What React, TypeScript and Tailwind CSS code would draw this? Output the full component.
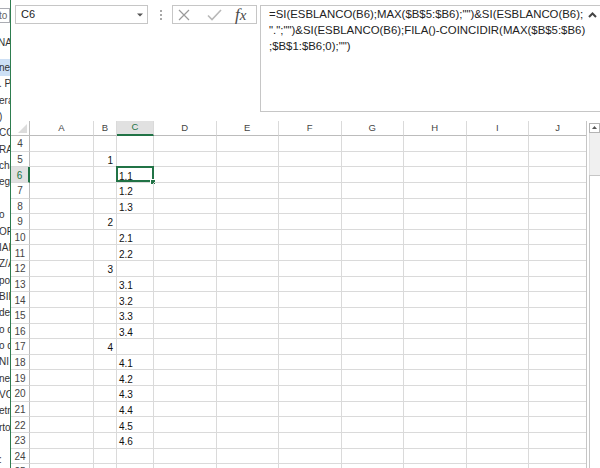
import React from "react";

const COLS = [
  { key: "A", w: "w-[64px]" },
  { key: "B", w: "w-[23px]" },
  { key: "C", w: "w-[37px]" },
  { key: "D", w: "w-[62.5px]" },
  { key: "E", w: "w-[62.5px]" },
  { key: "F", w: "w-[62.5px]" },
  { key: "G", w: "w-[62.5px]" },
  { key: "H", w: "w-[62.5px]" },
  { key: "I", w: "w-[62.5px]" },
  { key: "J", w: "w-[58px]" },
];

const B_VALS: Record<number, string> = { 5: "1", 9: "2", 12: "3", 17: "4" };
const C_VALS: Record<number, string> = {
  6: "1.1", 7: "1.2", 8: "1.3",
  10: "2.1", 11: "2.2",
  13: "3.1", 14: "3.2", 15: "3.3", 16: "3.4",
  18: "4.1", 19: "4.2", 20: "4.3", 21: "4.4", 22: "4.5", 23: "4.6",
};

const ROWS = Array.from({ length: 22 }, (_, i) => i + 4);

// bits of the window that sits behind excel on the left
const STRIP = [
  "ner", ". PI", "eral", ")", "CO", "RA", "cha", "egi", "", "o", "ORI", "IAI",
  "Z/A", " po", "BID", "des", "o de", "o de", "NI", "ner", "VO", "etr", "rto", "", " :",
];

function LeftStrip() {
  return (
    <div className="flex w-[10px] shrink-0 flex-col overflow-hidden text-[10px] text-[#333]">
      <div className="mt-[8px] flex h-[15px] w-[10px] items-center border-y border-r border-[#abadb3] whitespace-nowrap">
        <span className="ml-[-1px] text-[#666]">to</span>
      </div>
      <div className="mt-[12px] flex h-[16px] items-center whitespace-nowrap">
        <span className="ml-[-2px]">NAS</span>
      </div>
      <div className="mt-[8.8px] flex flex-col">
        {STRIP.map((t, i) => (
          <div
            key={i}
            className={
              "flex h-[16.35px] items-center whitespace-nowrap " +
              (i === 0 ? "bg-[#cde0f5]" : "")
            }
          >
            <span className="ml-[-1px]">{t}</span>
          </div>
        ))}
      </div>
    </div>
  );
}

function FormulaBar() {
  return (
    <div className="flex h-[121px] shrink-0 items-start pt-[5px]">
      <div className="ml-[4px] flex h-[19px] w-[133px] items-center justify-between border border-[#c6c6c6] pl-[5px] pr-[4px] text-[11px] text-[#222]">
        <span>C6</span>
        <svg width="6" height="4" viewBox="0 0 6 4">
          <path d="M0 0.5h6L3 3.5z" fill="#555" />
        </svg>
      </div>
      <div className="flex h-[19px] w-[24px] flex-col gap-[2.5px] pl-[12px] pt-[5px]">
        <div className="h-[1.5px] w-[1.5px] bg-[#a8a8a8]" />
        <div className="h-[1.5px] w-[1.5px] bg-[#a8a8a8]" />
        <div className="h-[1.5px] w-[1.5px] bg-[#a8a8a8]" />
      </div>
      <div className="flex h-[19px] w-[85px] items-center border border-[#c6c6c6]">
        <svg className="ml-[5px]" width="12" height="12" viewBox="0 0 12 12">
          <path d="M1 1L11 11M11 1L1 11" stroke="#9a9a9a" strokeWidth="1.2" fill="none" />
        </svg>
        <svg className="ml-[17px]" width="15" height="12" viewBox="0 0 15 12">
          <path d="M1 6.5L5 10.5L14 1" stroke="#b8b8b8" strokeWidth="1.6" fill="none" />
        </svg>
        <span className="ml-[13px] font-['Liberation_Serif',serif] italic leading-none text-[#4a4a4a]">
          <span className="text-[17px]">f</span>
          <span className="text-[15px]">x</span>
        </span>
      </div>
      <div className="ml-[3px] flex h-[107px] flex-1 border-y border-l border-[#c6c6c6]">
        <div className="flex-1 pl-[8px] text-[11.4px] leading-[16.2px] text-[#222] whitespace-nowrap">
          <div>=SI(ESBLANCO(B6);MAX($B$5:$B6);"")&amp;SI(ESBLANCO(B6);</div>
          <div>".";"")&amp;SI(ESBLANCO(B6);FILA()-COINCIDIR(MAX($B$5:$B6)</div>
          <div>;$B$1:$B6;0);"")</div>
        </div>
        <svg className="mr-[3px] mt-[6px]" width="9" height="6" viewBox="0 0 9 6">
          <path d="M1 5L4.5 1.5L8 5" stroke="#444" strokeWidth="2" fill="none" />
        </svg>
      </div>
    </div>
  );
}

function HeaderRow() {
  return (
    <div className="flex h-[15px] shrink-0">
      <div className="flex w-[19px] shrink-0 items-end justify-end border-b border-r border-[#bcbcbc] pb-[2px] pr-[2px]">
        <svg width="9" height="9" viewBox="0 0 9 9">
          <path d="M9 0V9H0Z" fill="#dcdcdc" />
        </svg>
      </div>
      {COLS.map((c) => {
        const sel = c.key === "C";
        return (
          <div
            key={c.key}
            className={
              c.w +
              " flex shrink-0 items-center justify-center border-r border-[#dadada] text-[9.5px] " +
              (sel
                ? "border-b-2 border-b-[#217346] bg-[#e1e1e1] text-[#217346]"
                : "border-b border-b-[#bcbcbc] text-[#444]")
            }
          >
            {c.key}
          </div>
        );
      })}
    </div>
  );
}

function Row({ n }: { n: number }) {
  const sel = n === 6;
  return (
    <div className="flex h-[15.63px] shrink-0">
      <div
        className={
          "flex w-[19px] shrink-0 items-center justify-center border-b border-b-[#dadada] pt-[1px] text-[10px] " +
          (sel
            ? "border-r-2 border-r-[#217346] bg-[#e1e1e1] text-[#217346]"
            : "border-r border-r-[#bcbcbc] text-[#444]")
        }
      >
        {n}
      </div>
      {COLS.map((c) => {
        let content: React.ReactNode = null;
        let align = "justify-start pl-[2px]";
        if (c.key === "B" && B_VALS[n]) {
          content = B_VALS[n];
          align = "justify-end pr-[3px]";
        }
        if (c.key === "C" && C_VALS[n]) content = C_VALS[n];
        const isSel = sel && c.key === "C";
        return (
          <div
            key={c.key}
            className={
              c.w +
              " relative flex shrink-0 items-center border-b border-r border-[#dadada] pt-[3px] text-[10px] text-[#111] " +
              align
            }
          >
            {content}
            {isSel && (
              <>
                <div className="absolute bottom-[0px] left-[-1px] right-[-1px] top-[-1px] border-2 border-[#217346]" />
                <div className="absolute bottom-[-3px] right-[-3px] h-[6px] w-[6px] border border-white bg-[#217346]" />
              </>
            )}
          </div>
        );
      })}
    </div>
  );
}

function ScrollBar() {
  return (
    <div className="flex w-[13px] shrink-0 flex-col pl-[2px]">
      <div className="mt-[1.7px] flex h-[10.5px] w-[11px] items-center justify-center border border-[#b4b4b4] bg-white">
        <svg width="5" height="3" viewBox="0 0 5 3">
          <path d="M0 3L2.5 0L5 3Z" fill="#555" />
        </svg>
      </div>
      <div className="h-[42px] border-l border-[#e0e0e0] bg-[#f0f0f0]" />
      <div className="flex-1 border-l border-t border-[#c6c6c6] bg-white" />
    </div>
  );
}

export default function App() {
  return (
    <div className="flex h-[468px] w-[600px] overflow-hidden bg-white font-['Liberation_Sans',Arial,sans-serif]">
      <LeftStrip />
      <div className="w-px shrink-0 bg-[#2e7d4f]" />
      <div className="flex min-w-0 flex-1 flex-col">
        <FormulaBar />
        <div className="flex min-h-0 flex-1">
          <div className="flex w-[576px] shrink-0 flex-col overflow-hidden border-r border-[#c6c6c6]">
            <HeaderRow />
            {ROWS.map((n) => (
              <Row key={n} n={n} />
            ))}
          </div>
          <ScrollBar />
        </div>
      </div>
    </div>
  );
}
